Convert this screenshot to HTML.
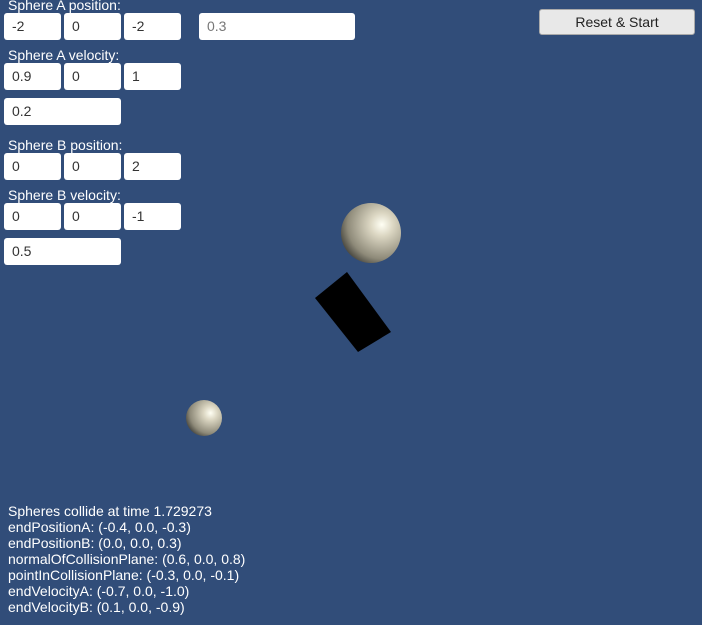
<!DOCTYPE html><html><head><style>
body{margin:0;width:702px;height:625px;background:#314d79;position:relative;overflow:hidden;font-family:"Liberation Sans",sans-serif;font-size:14px;color:#fff}
.l{position:absolute;left:8px;line-height:16px}
.b{position:absolute;background:#fff;border-radius:3px;color:#333;height:27px;line-height:27px;padding-left:8px;box-sizing:border-box;font-size:14px}
.t{position:absolute;left:8px;top:503px;line-height:16px}
</style></head><body>
<div class="l" style="top:-3px">Sphere A position:</div>
<div class="b" style="left:4px;top:13px;width:57px">-2</div>
<div class="b" style="left:64px;top:13px;width:57px">0</div>
<div class="b" style="left:124px;top:13px;width:57px">-2</div>
<div class="b" style="left:199px;top:13px;width:156px;color:#777">0.3</div>
<div class="b" style="left:539px;top:9px;width:156px;height:26px;line-height:25px;padding:0;text-align:center;background:#e8e8e8;color:#222;border:1px solid #aaa">Reset &amp; Start</div>
<div class="l" style="top:47px">Sphere A velocity:</div>
<div class="b" style="left:4px;top:63px;width:57px">0.9</div>
<div class="b" style="left:64px;top:63px;width:57px">0</div>
<div class="b" style="left:124px;top:63px;width:57px">1</div>
<div class="b" style="left:4px;top:98px;width:117px">0.2</div>
<div class="l" style="top:137px">Sphere B position:</div>
<div class="b" style="left:4px;top:153px;width:57px">0</div>
<div class="b" style="left:64px;top:153px;width:57px">0</div>
<div class="b" style="left:124px;top:153px;width:57px">2</div>
<div class="l" style="top:187px">Sphere B velocity:</div>
<div class="b" style="left:4px;top:203px;width:57px">0</div>
<div class="b" style="left:64px;top:203px;width:57px">0</div>
<div class="b" style="left:124px;top:203px;width:57px">-1</div>
<div class="b" style="left:4px;top:238px;width:117px">0.5</div>
<svg style="position:absolute;left:0;top:0" width="702" height="625">
<defs><radialGradient id="g" cx="0.68" cy="0.36" r="0.95" fx="0.68" fy="0.36"><stop offset="0" stop-color="#fffff4"/><stop offset="0.2" stop-color="#dcd7c3"/><stop offset="0.6" stop-color="#8e8a79"/><stop offset="0.85" stop-color="#2a2a26"/></radialGradient></defs>
<circle cx="371" cy="233" r="30" fill="url(#g)"/>
<circle cx="204" cy="418" r="18" fill="url(#g)"/>
<polygon points="347,272 391,332 358,352 315,298" fill="#000"/>
</svg>
<div class="t">Spheres collide at time 1.729273<br>endPositionA: (-0.4, 0.0, -0.3)<br>endPositionB: (0.0, 0.0, 0.3)<br>normalOfCollisionPlane: (0.6, 0.0, 0.8)<br>pointInCollisionPlane: (-0.3, 0.0, -0.1)<br>endVelocityA: (-0.7, 0.0, -1.0)<br>endVelocityB: (0.1, 0.0, -0.9)</div>
</body></html>
